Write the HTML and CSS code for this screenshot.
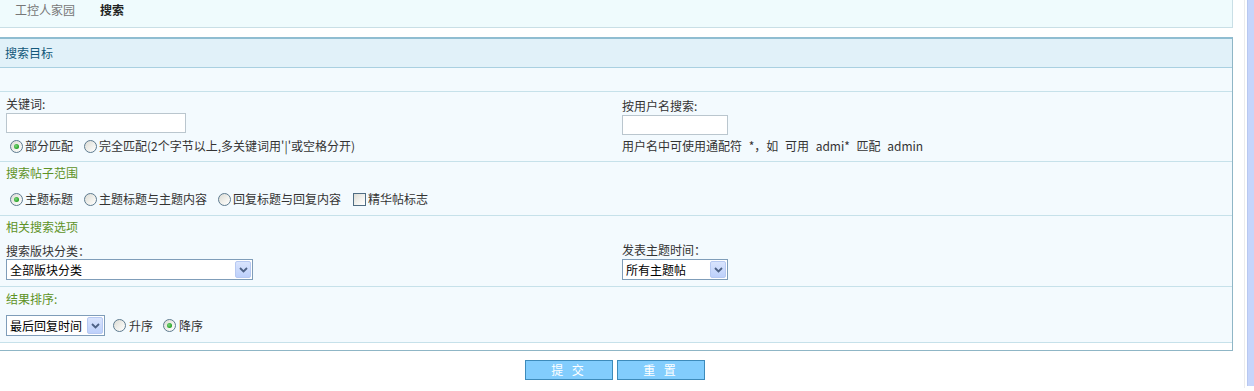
FILE: index.html
```html
<!DOCTYPE html>
<html lang="zh-CN">
<head>
<meta charset="utf-8">
<title>搜索</title>
<link rel="stylesheet" href="styles.css">
</head>
<body>
<div class="page">
  <div class="main">
    <div class="nav">
      <span class="crumb">工控人家园</span>
      <span class="crumb cur">搜索</span>
    </div>

    <div class="panel">
      <div class="hd">搜索目标</div>
      <div class="row empty"></div>

      <div class="row cols kw">
        <div class="col col-l">
          <div class="line">关键词:</div>
          <div class="input w-kw"></div>
          <div class="opts opts-kw">
            <span class="opt"><span class="radio on"></span>部分匹配</span>
            <span class="opt"><span class="radio"></span>完全匹配(2个字节以上,多关键词用'|'或空格分开)</span>
          </div>
        </div>
        <div class="col col-r">
          <div class="line">按用户名搜索:</div>
          <div class="input w-user"></div>
          <div class="line hint">用户名中可使用通配符 *，如 可用 admi* 匹配 admin</div>
        </div>
      </div>

      <div class="row sec-range">
        <div class="title">搜索帖子范围</div>
        <div class="opts opts-range">
          <span class="opt"><span class="radio on"></span>主题标题</span>
          <span class="opt"><span class="radio"></span>主题标题与主题内容</span>
          <span class="opt"><span class="radio"></span>回复标题与回复内容</span>
          <span class="opt"><span class="check"></span>精华帖标志</span>
        </div>
      </div>

      <div class="row sec-more">
        <div class="title">相关搜索选项</div>
        <div class="cols">
          <div class="col col-l">
            <div class="line lbl">搜索版块分类：</div>
            <div class="select w-forum"><span class="sel-text">全部版块分类</span><span class="sel-btn"><svg viewBox="0 0 9 6" width="9" height="6"><path d="M1 1 L4.5 4.5 L8 1" fill="none" stroke="#4d6185" stroke-width="1.8"/></svg></span></div>
          </div>
          <div class="col col-r">
            <div class="line lbl lbl-r">发表主题时间：</div>
            <div class="select w-time"><span class="sel-text">所有主题帖</span><span class="sel-btn"><svg viewBox="0 0 9 6" width="9" height="6"><path d="M1 1 L4.5 4.5 L8 1" fill="none" stroke="#4d6185" stroke-width="1.8"/></svg></span></div>
          </div>
        </div>
      </div>

      <div class="row sec-order">
        <div class="title">结果排序:</div>
        <div class="order">
          <div class="select w-order"><span class="sel-text">最后回复时间</span><span class="sel-btn"><svg viewBox="0 0 9 6" width="9" height="6"><path d="M1 1 L4.5 4.5 L8 1" fill="none" stroke="#4d6185" stroke-width="1.8"/></svg></span></div>
          <span class="opt"><span class="radio"></span>升序</span>
          <span class="opt"><span class="radio on"></span>降序</span>
        </div>
      </div>
    </div>

    <div class="actions">
      <button class="btn" type="button">提 交</button>
      <button class="btn" type="button">重 置</button>
    </div>
  </div>
  <div class="scrollbar"></div>
</div>
</body>
</html>
```

FILE: styles.css
```css
* { box-sizing: border-box; }
html, body { margin: 0; padding: 0; background: #fff; }
body {
  font-family: "Noto Sans CJK SC", "Noto Sans", sans-serif;
  font-size: 12px;
  line-height: 16px;
  color: #333;
}
.page {
  display: flex;
  width: 1254px;
  height: 391px;
  overflow: hidden;
}
.main { width: 1233px; flex: none; }

.nav {
  height: 28px;
  padding: 2px 0 0 15px;
  background: #effbfd;
  border-bottom: 1px solid #c9dfe6;
  border-right: 1px solid #c9dfe6;
  display: flex;
  gap: 25px;
}
.crumb { color: #777; }
.crumb.cur { color: #222; font-weight: bold; }

.panel {
  margin-top: 9px;
  border-top: 2px solid #8fbdd1;
  border-right: 1px solid #8fb6c6;
  border-bottom: 1px solid #8fb6c6;
  padding-bottom: 7px;
  background: #fff;
}
.hd {
  height: 29px;
  padding: 6px 0 0 5px;
  background: #e1f1f9;
  color: #12587a;
  border-bottom: 1px solid #a9d0e1;
}
.row {
  background: #f3fafe;
  border-bottom: 1px solid #c6e1ea;
}
.empty { height: 24px; }

.cols { display: grid; grid-template-columns: 622px 1fr; }
.col-l { padding-left: 6px; }
.col-r { padding-left: 0; }

.kw { height: 70px; }
.kw .col-l { padding-top: 4px; }
.kw .col-r { padding-top: 6px; }
.line { height: 16px; white-space: nowrap; }
.input {
  height: 20px;
  background: #fff;
  border: 1px solid #bac6ce;
  margin-top: 1px;
}
.w-kw { width: 180px; }
.w-user { width: 106px; }
.hint { margin-top: 3px; word-spacing: 4px; }

.opts { display: flex; align-items: center; height: 16px; white-space: nowrap; }
.opts-kw { margin-top: 5px; }
.opt { display: inline-flex; align-items: center; margin-right: 7px; }
.radio {
  width: 13px;
  height: 13px;
  margin: 0 2px 0 4px;
  border: 1px solid #5d7a8f;
  border-radius: 50%;
  background: linear-gradient(135deg, #dcdcd5 0%, #f2f2ee 60%, #ffffff 100%);
  display: inline-flex;
  align-items: center;
  justify-content: center;
  flex: none;
}
.radio.on::after {
  content: "";
  width: 5px;
  height: 5px;
  border-radius: 50%;
  background: radial-gradient(circle at 40% 40%, #7fd67f, #21a121 70%);
}
.check {
  width: 13px;
  height: 13px;
  margin: 0 2px 0 5px;
  border: 1px solid #4f6d83;
  background: linear-gradient(135deg, #dcdcd5 0%, #f4f4f1 60%, #fff 100%);
  flex: none;
}

.title { color: #5e9226; height: 16px; }

.sec-range { height: 54px; padding: 3px 0 0 6px; }
.opts-range { margin-top: 10px; }

.sec-more { height: 71px; padding-top: 3px; }
.sec-more .title { padding-left: 6px; }
.lbl { margin-top: 8px; }
.lbl-r { margin-top: 7px; margin-bottom: 1px; }

.select {
  height: 21px;
  background: #fff;
  border: 1px solid #7f9db9;
  display: flex;
  align-items: stretch;
  color: #000;
}
.sel-text { flex: 1; padding: 2px 0 0 3px; white-space: nowrap; }
.sel-btn {
  width: 16px;
  margin: 1px;
  border: 1px solid #b7c9f2;
  border-radius: 2px;
  background: linear-gradient(180deg, #d9e4fd 0%, #bdd0fb 100%);
  display: flex;
  align-items: center;
  justify-content: center;
}
.w-forum { width: 247px; }
.w-time { width: 106px; }
.w-order { width: 99px; }

.sec-order { height: 56px; padding: 4px 0 0 6px; }
.order { display: flex; align-items: center; margin-top: 8px; }
.order .select { margin-right: 5px; }
.order .radio { margin-left: 3px; margin-right: 3px; }

.actions {
  display: flex;
  justify-content: center;
  gap: 4px;
  padding-top: 9px;
  padding-right: 3px;
}
.btn {
  width: 88px;
  height: 20px;
  background: #82cdfd;
  border: 1px solid #3d8bbb;
  color: #fff;
  font-family: "Noto Sans CJK SC", "Noto Sans", sans-serif;
  font-size: 12px;
  line-height: 16px;
  letter-spacing: 3px;
  padding: 0;
}

.scrollbar {
  margin-left: auto;
  width: 10px;
  height: 388px;
  border-left: 1px solid #ececec;
  padding-left: 2px;
  display: flex;
  align-items: flex-start;
  background: #fff;
}
.scrollbar::before {
  content: "";
  width: 7px;
  height: 386px;
  background: #c6d5fb;
  border-left: 1px solid #b8c8f0;
}
```
